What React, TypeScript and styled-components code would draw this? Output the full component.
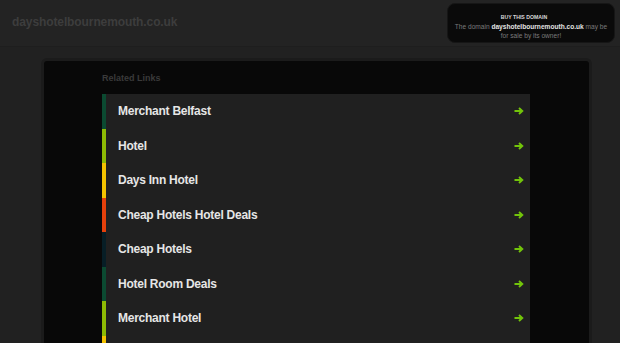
import styled, { createGlobalStyle } from 'styled-components';

const GlobalStyle = createGlobalStyle`
  html, body {
    margin: 0;
    padding: 0;
    background: #212121;
    font-family: "Liberation Sans", Arial, sans-serif;
    overflow: hidden;
  }
`;

const Header = styled.header`
  display: flex;
  justify-content: space-between;
  align-items: flex-start;
  height: 47px;
  background: #232323;
  border-bottom: 1px solid #1e1e1e;
  box-sizing: border-box;
`;

const Domain = styled.div`
  font-size: 12px;
  font-weight: 700;
  color: #3d3d3d;
  padding: 15px 0 0 12px;
  letter-spacing: -0.1px;
`;

const BuyBox = styled.div`
  width: 168px;
  height: 40px;
  margin: 3px 5px 0 0;
  box-sizing: border-box;
  background: #0a0a0a;
  border: 1px solid #161616;
  border-radius: 8px;
  text-align: center;
  padding-top: 9px;
`;

const BuyTitle = styled.div`
  font-size: 5.2px;
  font-weight: 700;
  color: #d8d8d8;
  margin-right: 14px;
  line-height: 8px;
  margin-bottom: 2px;
`;

const BuyText = styled.div`
  font-size: 6.6px;
  color: #7a7a7a;
  line-height: 8.5px;
  padding: 0 6px;

  b {
    color: #e4e4e4;
  }
`;

const Panel = styled.main`
  margin: 11px 28px 0 41px;
  height: 300px;
  border: 3px solid #1b1b1b;
  border-bottom: none;
  border-radius: 6px 6px 0 0;
  background: #080808;
  padding: 11px 59px 0 58px;
`;

const Label = styled.div`
  font-size: 9px;
  font-weight: 700;
  color: #3a3a3a;
  height: 22px;
  line-height: 12px;
`;

const List = styled.div`
  display: flex;
  flex-direction: column;
`;

const Row = styled.div<{ $stripe: string }>`
  display: flex;
  align-items: center;
  justify-content: space-between;
  height: 34.5px;
  background: #202020;
  border-left: 4px solid ${(p) => p.$stripe};
  padding: 0 6px 0 12px;
`;

const RowText = styled.span`
  font-size: 12px;
  font-weight: 700;
  color: #e6e6e6;
  letter-spacing: -0.25px;
`;

const Arrow = () => (
  <svg width="10" height="8" viewBox="0 0 10 8">
    <path d="M0.5 4H8M5 1L8.3 4L5 7" fill="none" stroke="#72c40a" strokeWidth="1.9" />
  </svg>
);

const links: [string, string][] = [
  ['Merchant Belfast', '#0b4a31'],
  ['Hotel', '#8dba04'],
  ['Days Inn Hotel', '#f3c200'],
  ['Cheap Hotels Hotel Deals', '#e5400b'],
  ['Cheap Hotels', '#071e26'],
  ['Hotel Room Deals', '#0b4a31'],
  ['Merchant Hotel', '#8dba04'],
  ['Hotel Deals', '#f3c200'],
];

export default function App() {
  return (
    <>
      <GlobalStyle />
      <Header>
        <Domain>dayshotelbournemouth.co.uk</Domain>
        <BuyBox>
          <BuyTitle>BUY THIS DOMAIN</BuyTitle>
          <BuyText>
            The domain <b>dayshotelbournemouth.co.uk</b> may be for sale by its owner!
          </BuyText>
        </BuyBox>
      </Header>
      <Panel>
        <Label>Related Links</Label>
        <List>
          {links.map(([text, color]) => (
            <Row key={text} $stripe={color}>
              <RowText>{text}</RowText>
              <Arrow />
            </Row>
          ))}
        </List>
      </Panel>
    </>
  );
}
